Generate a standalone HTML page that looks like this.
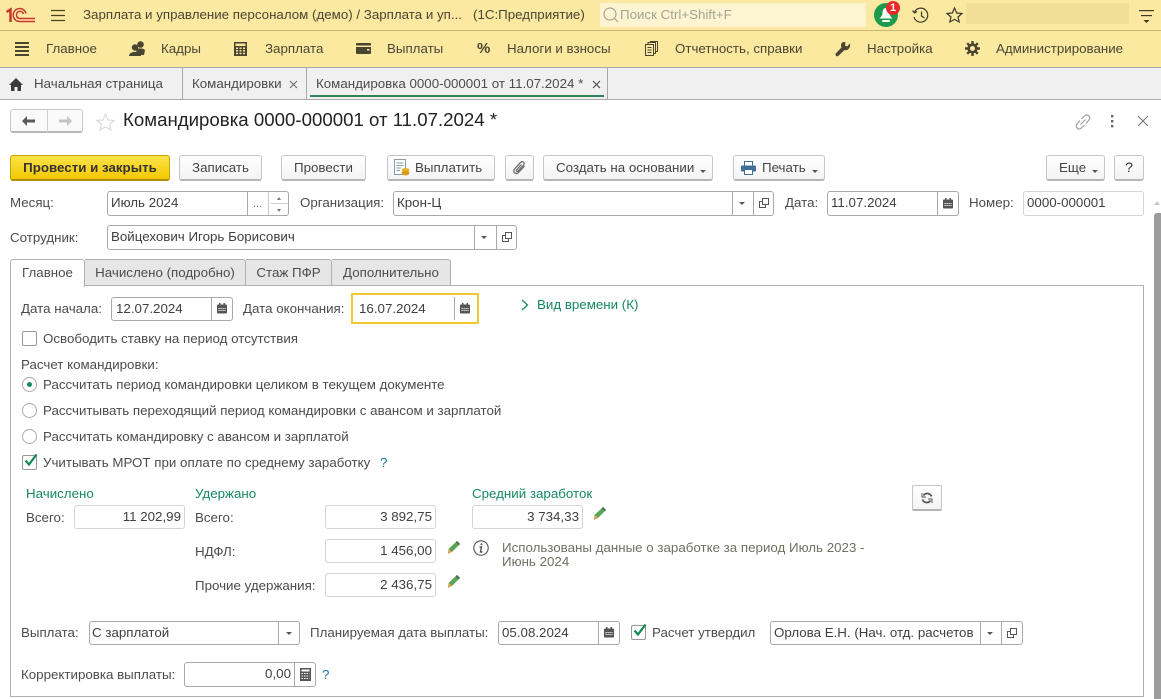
<!DOCTYPE html>
<html lang="ru"><head><meta charset="utf-8"><title>Командировка</title>
<style>
html,body{margin:0;padding:0;width:1161px;height:699px;overflow:hidden;background:#fff}
body{position:relative;font-family:"Liberation Sans",Arial,sans-serif;font-size:13.33px;color:#4c4c4c}
.a,.t,.f,.b,svg.i,.d{position:absolute}
.t{white-space:nowrap;line-height:16px;height:16px}
.f{box-sizing:border-box;border:1px solid #a9a9a9;border-radius:3px;background:#fff;line-height:22px;padding-left:3px;white-space:nowrap;color:#3f3f3f}
.l{border-color:#d4d4d4}
.r{text-align:right;padding:0 3px 0 0}
.d{top:0;bottom:0;width:1px;background:#a9a9a9}
.b{box-sizing:border-box;top:155px;height:26px;border:1px solid #c6c6c6;border-bottom:2px solid #b5b5b5;border-radius:3px;background:linear-gradient(#fff,#f4f4f4);line-height:23px;text-align:center;white-space:nowrap;color:#444}
.m{color:#4a4535}
.g{color:#16895f}
.q{color:#1a7a9e}
svg.i{overflow:visible}
.tb{position:absolute;top:259px;height:27px;box-sizing:border-box;background:#e6e6e6;border:1px solid #b0b0b0;border-left:0;border-radius:0 3px 0 0;line-height:26px;text-align:center;color:#4c4c4c}
.ar{position:absolute;width:0;height:0;border:3px solid transparent;border-top:3px solid #555;border-bottom:0}
</style></head><body>

<!-- title bar -->
<div class="a" style="left:0;top:0;width:1161px;height:30px;background:#fbe9a1"></div>
<div class="a" style="left:0;top:30px;width:1161px;height:1px;background:#c8b670"></div>
<svg class="i" style="left:0;top:0" width="40" height="30" viewBox="0 0 40 30" fill="none" stroke="#c8372d" stroke-width="1.500">
<path d="M6.500 12 10.500 9.500V22" stroke-width="2.500"/><path d="M26 13.500A6.500 6.500 0 1 0 20.500 21.500H35"/><path d="M23.500 14A3.600 3.600 0 1 0 20.500 18.500H35"/></svg>
<svg class="i" style="left:51px;top:9px" width="15" height="13" stroke="#4a4320" stroke-width="1.2"><path d="M0 1.500H14M0 6.500H14M0 11.500H14"/></svg>
<div class="t m" style="left:83px;top:7px">Зарплата и управление персоналом (демо) / Зарплата и уп...</div>
<div class="t m" style="left:473px;top:7px">(1С:Предприятие)</div>
<div class="a" style="left:600px;top:3px;width:266px;height:24px;background:#fdf5d2"></div>
<svg class="i" style="left:603px;top:7px" width="16" height="17" fill="none" stroke="#a8a598" stroke-width="1.2"><circle cx="7" cy="7" r="6"/><path d="M11.500 11.500 15 15"/></svg>
<div class="t" style="left:620px;top:7px;color:#a4a296">Поиск Ctrl+Shift+F</div>
<div class="a" style="left:874px;top:3px;width:24px;height:24px;border-radius:50%;background:#1d9a4c"></div>
<svg class="i" style="left:878px;top:7px" width="16" height="16" fill="#fff"><path d="M8 1C5.500 1 4.500 3.500 4.500 6 4.500 8.500 3 10 1.500 11.500H14.500C13 10 11.500 8.500 11.500 6 11.500 3.500 10.500 1 8 1Z"/><rect x="4" y="13" width="8" height="2" rx="1"/></svg>
<div class="a" style="left:886px;top:1px;width:14px;height:14px;border-radius:50%;background:#e8282b;color:#fff;font-weight:bold;font-size:11px;line-height:14px;text-align:center">1</div>
<svg class="i" style="left:912px;top:7px" width="18" height="17" fill="none" stroke="#3c3a30" stroke-width="1.200"><path d="M2.500 5A7 7 0 1 1 2 10"/><path d="M.5 3.500 2.500 6 5 4.500" /><path d="M9.500 4.500V9L12.500 11"/></svg>
<svg class="i" style="left:946px;top:7px" width="17" height="16" fill="none" stroke="#3c3a30" stroke-width="1.200"><path d="M8.500 1 10.700 6 16 6.500 12 10 13.200 15 8.500 12.400 3.800 15 5 10 1 6.500 6.300 6Z"/></svg>
<div class="a" style="left:966px;top:3px;width:163px;height:21px;background:#f1df98"></div>
<svg class="i" style="left:1139px;top:9px" width="16" height="17" fill="#3f3a22"><rect width="15" height="1.200" y="1"/><rect x="2" width="11" height="1.200" y="6"/><path d="M4.500 11H10.500L7.500 14Z"/></svg>

<!-- menu bar -->
<div class="a" style="left:0;top:31px;width:1161px;height:36px;background:#fbe9a0"></div>
<div class="a" style="left:0;top:67px;width:1161px;height:1px;background:#a8a8a8"></div>
<svg class="i" style="left:15px;top:42px" width="15" height="14" fill="#4a4530"><rect width="14" height="2" y="0"/><rect width="14" height="2" y="4"/><rect width="14" height="2" y="8"/><rect width="14" height="2" y="12"/></svg>
<div class="t m" style="left:46px;top:41px">Главное</div>
<svg class="i" style="left:129px;top:41px" width="18" height="16" fill="#4a4530"><circle cx="11.500" cy="3.500" r="3.300"/><path d="M7 8.500C9 7 14 7 16 9L15 14H8Z" /><circle cx="6" cy="6.500" r="3.200"/><path d="M0 15C0 9.500 12 9.500 12 15Z"/></svg>
<div class="t m" style="left:161px;top:41px">Кадры</div>
<svg class="i" style="left:234px;top:42px" width="13" height="14"><rect width="13" height="14" fill="#4a4530"/><rect x="1.500" y="1.500" width="10" height="2.500" fill="#fbe9a0"/><g fill="#fbe9a0"><rect x="2" y="5.500" width="2" height="1.500"/><rect x="5.500" y="5.500" width="2" height="1.500"/><rect x="9" y="5.500" width="2" height="1.500"/><rect x="2" y="8" width="2" height="1.500"/><rect x="5.500" y="8" width="2" height="1.500"/><rect x="9" y="8" width="2" height="1.500"/><rect x="2" y="10.700" width="2" height="1.500"/><rect x="5.500" y="10.700" width="2" height="1.500"/><rect x="9" y="10.700" width="2" height="1.500"/></g></svg>
<div class="t m" style="left:265px;top:41px">Зарплата</div>
<svg class="i" style="left:356px;top:43px" width="15" height="11"><rect width="15" height="11" rx="1" fill="#4a4530"/><rect y="2.500" width="15" height="1.500" fill="#fbe9a0"/><rect x="11" y="6" width="2.500" height="1.500" fill="#fbe9a0"/></svg>
<div class="t m" style="left:387px;top:41px">Выплаты</div>
<div class="t" style="left:477px;top:41px;font-weight:bold;font-size:15px;color:#4a4530">%</div>
<div class="t m" style="left:507px;top:41px">Налоги и взносы</div>
<svg class="i" style="left:645px;top:41px" width="13" height="15" fill="none" stroke="#4a4530"><rect x=".5" y="3.500" width="8" height="11" fill="#fbe9a0"/><path d="M3 3V1.500H10.500V12.500H9M5.500 1V.5H12.500V10.500H11M2.500 6.500H6.500M2.500 9H6.500M2.500 11.500H6.500"/></svg>
<div class="t m" style="left:675px;top:41px">Отчетность, справки</div>
<svg class="i" style="left:835px;top:41px" width="16" height="16" fill="#4a4530"><path d="M15 2.500 12 5.500 10 4.500 10.500 1.500C8.500.2 6 1.500 6 4.500L6.500 6.500 .8 12.500C-.2 14 1.500 16 3.200 15L9.500 9C12.500 10 15.800 7 15 2.500Z"/></svg>
<div class="t m" style="left:867px;top:41px">Настройка</div>
<svg class="i" style="left:965px;top:41px" width="15" height="15" fill="none" stroke="#4a4530"><circle cx="7.500" cy="7.500" r="3.800" stroke-width="2.600"/><path stroke-width="2.400" d="M7.500 0V3M7.500 12V15M0 7.500H3M12 7.500H15M2.200 2.200 4.300 4.300M10.700 10.700 12.800 12.800M12.800 2.200 10.700 4.300M4.300 10.700 2.200 12.800"/></svg>
<div class="t m" style="left:996px;top:41px">Администрирование</div>

<!-- tab strip -->
<div class="a" style="left:0;top:68px;width:1161px;height:31px;background:#f0f0f0"></div>
<div class="a" style="left:0;top:99px;width:1161px;height:1px;background:#a8a8a8"></div>
<div class="a" style="left:182px;top:68px;width:1px;height:31px;background:#a8a8a8"></div>
<div class="a" style="left:306px;top:68px;width:1px;height:31px;background:#a8a8a8"></div>
<div class="a" style="left:607px;top:68px;width:1px;height:31px;background:#a8a8a8"></div>
<div class="a" style="left:310px;top:95px;width:294px;height:2px;background:#2f8259"></div>
<svg class="i" style="left:9px;top:78px" width="14" height="13" fill="#3a3a3a"><path d="M7 0 14 7H12V13H8.500V9H5.500V13H2V7H0Z"/></svg>
<div class="t" style="left:34px;top:76px">Начальная страница</div>
<div class="t" style="left:192px;top:76px">Командировки</div>
<svg class="i" style="left:289px;top:80px" width="9" height="9" stroke="#666"><path d="M1 1 8 8M8 1 1 8"/></svg>
<div class="t" style="left:316px;top:76px">Командировка 0000-000001 от 11.07.2024 *</div>
<svg class="i" style="left:592px;top:80px" width="9" height="9" stroke="#444"><path d="M1 1 8 8M8 1 1 8"/></svg>

<!-- header -->
<div class="a" style="left:10px;top:109px;width:73px;height:24px;box-sizing:border-box;border:1px solid #c8c8c8;border-bottom:2px solid #b8b8b8;border-radius:3px;background:#fafafa"></div>
<div class="a" style="left:47px;top:110px;width:1px;height:22px;background:#d0d0d0"></div>
<svg class="i" style="left:22px;top:116px" width="14" height="10" fill="#5a5a5a"><path d="M0 5 5 0V3.500H13V6.500H5V10Z"/></svg>
<svg class="i" style="left:58px;top:116px" width="14" height="10" fill="#c4c4c4"><path d="M14 5 9 0V3.500H1V6.500H9V10Z"/></svg>
<svg class="i" style="left:96px;top:113px" width="19" height="18" fill="none" stroke="#dcdcdc" stroke-width="1.200"><path d="M9.500 1 12 7 18 7.500 13.500 11.500 15 17 9.500 14 4 17 5.500 11.500 1 7.500 7 7Z"/></svg>
<div class="t" style="left:123px;top:110px;font-size:18.67px;line-height:20px;height:20px;color:#222">Командировка 0000-000001 от 11.07.2024 *</div>
<svg class="i" style="left:1075px;top:114px" width="16" height="16" fill="none" stroke="#a0a0a0" stroke-width="1.200"><path d="M6.500 5 9.500 2A2.800 2.800 0 0 1 14 6L11 9.500M9.500 11 6.500 14A2.800 2.800 0 0 1 2 10L5 6.500M5.500 10.500 10.500 5.500"/></svg>
<svg class="i" style="left:1110px;top:115px" width="4" height="14" fill="#666"><rect x="1" y="0" width="2.400" height="2.400"/><rect x="1" y="5" width="2.400" height="2.400"/><rect x="1" y="10" width="2.400" height="2.400"/></svg>
<svg class="i" style="left:1137px;top:115px" width="12" height="12" stroke="#777" stroke-width="1.100"><path d="M1 1 11 11M11 1 1 11"/></svg>

<!-- command bar -->
<div class="b" style="left:10px;width:160px;background:linear-gradient(#fbe34a,#f4c800);border-color:#c9a300;border-bottom-color:#b08f00;font-weight:bold;color:#333">Провести и закрыть</div>
<div class="b" style="left:179px;width:83px">Записать</div>
<div class="b" style="left:281px;width:85px">Провести</div>
<div class="b" style="left:387px;width:108px;padding-left:27px;text-align:left">Выплатить</div>
<svg class="i" style="left:394px;top:159px" width="16" height="18"><rect x=".5" y=".5" width="11" height="15" fill="#fff" stroke="#8e9aa8"/><path d="M2.500 4H9.500M2.500 6.500H9.500M2.500 9H7M2.500 11.500H6" stroke="#8e9aa8"/><ellipse cx="11.500" cy="11" rx="4" ry="2" fill="#e8b325"/><ellipse cx="11.500" cy="14" rx="4" ry="2.400" fill="#d99a1a"/></svg>
<div class="b" style="left:505px;width:29px"></div>
<svg class="i" style="left:512px;top:160px" width="15" height="16" fill="none" stroke="#6e6e6e" stroke-width="1.300"><path d="M12.500 6 6.500 12.500C4 15 0 12 2.500 9L8.500 2.500C10.500.5 13.500 2.800 11.500 5L6 11C5 12 3.700 11 4.500 10L9.500 4.500"/></svg>
<div class="b" style="left:543px;width:170px;padding-left:12px;text-align:left">Создать на основании</div>
<div class="ar" style="left:700px;top:170px"></div>
<div class="b" style="left:733px;width:92px;padding-left:28px;text-align:left">Печать</div>
<svg class="i" style="left:741px;top:161px" width="15" height="14"><rect x="3.500" y=".5" width="8" height="5" fill="#fff" stroke="#3f6f96"/><rect y="4.500" width="15" height="6" rx="1" fill="#3f6f96"/><rect x="3.500" y="8.500" width="8" height="5" fill="#fff" stroke="#3f6f96"/></svg>
<div class="ar" style="left:812px;top:170px"></div>
<div class="b" style="left:1046px;width:59px;padding-left:12px;text-align:left">Еще</div>
<div class="ar" style="left:1092px;top:170px"></div>
<div class="b" style="left:1114px;width:30px;font-size:14px;color:#333">?</div>

<!-- row 1 -->
<div class="t" style="left:10px;top:195px">Месяц:</div>
<div class="f" style="left:107px;top:191px;width:182px;height:25px">Июль 2024<div class="d" style="left:139px"></div><div class="d" style="left:160px;background:#c8c8c8"></div></div>
<div class="t" style="left:253px;top:196px;color:#666;font-size:11px">...</div>
<div class="a" style="left:271px;top:203px;width:17px;height:1px;background:#d0d0d0"></div>
<div class="a" style="left:277px;top:197px;border:2px solid transparent;border-bottom:3px solid #777;border-top:0"></div>
<div class="ar" style="left:277px;top:209px;border-width:2px;border-top-width:3px;border-top-color:#777;border-bottom:0"></div>
<div class="t" style="left:300px;top:195px">Организация:</div>
<div class="f" style="left:393px;top:191px;width:381px;height:25px">Крон-Ц<div class="d" style="left:338px"></div><div class="d" style="left:359px"></div></div>
<div class="ar" style="left:739px;top:202px"></div>
<svg class="i" style="left:759px;top:198px" width="11" height="11" fill="none" stroke="#555"><rect x="3.500" y=".5" width="6" height="6"/><path d="M3 3.500H.5V9.500H6.500V7"/></svg>
<div class="t" style="left:785px;top:195px">Дата:</div>
<div class="f" style="left:827px;top:191px;width:132px;height:25px">11.07.2024<div class="d" style="left:109px"></div></div>
<svg class="i cal" style="left:943px;top:198px" width="10" height="11"><rect y="1.500" width="10" height="9" rx="1" fill="#555"/><rect x="2" y="0" width="1.500" height="3" fill="#555"/><rect x="6.500" y="0" width="1.500" height="3" fill="#555"/><path d="M1.500 5.500H8.500M1.500 7.500H8.500" stroke="#fff" stroke-dasharray="1.200 .8"/></svg>
<div class="t" style="left:969px;top:195px">Номер:</div>
<div class="f l" style="left:1023px;top:191px;width:121px;height:25px">0000-000001</div>

<!-- row 2 -->
<div class="t" style="left:10px;top:230px">Сотрудник:</div>
<div class="f" style="left:107px;top:225px;width:410px;height:25px">Войцехович Игорь Борисович<div class="d" style="left:366px"></div><div class="d" style="left:388px"></div></div>
<div class="ar" style="left:481px;top:236px"></div>
<svg class="i" style="left:502px;top:232px" width="11" height="11" fill="none" stroke="#555"><rect x="3.500" y=".5" width="6" height="6"/><path d="M3 3.500H.5V9.500H6.500V7"/></svg>

<!-- tab panel -->
<div class="a" style="left:10px;top:285px;width:1134px;height:412px;box-sizing:border-box;border:1px solid #b0b0b0"></div>
<div class="a" style="left:10px;top:259px;width:75px;height:28px;box-sizing:border-box;background:#fff;border:1px solid #b0b0b0;border-bottom:0;border-radius:3px 3px 0 0;line-height:26px;text-align:center">Главное</div>
<div class="tb" style="left:85px;width:161px">Начислено (подробно)</div>
<div class="tb" style="left:246px;width:86px">Стаж ПФР</div>
<div class="tb" style="left:332px;width:119px">Дополнительно</div>

<!-- dates -->
<div class="t" style="left:21px;top:301px">Дата начала:</div>
<div class="f" style="left:111px;top:297px;width:122px;height:24px;padding-left:4px">12.07.2024<div class="d" style="left:99px"></div></div>
<svg class="i" style="left:217px;top:303px" width="10" height="11"><rect y="1.500" width="10" height="9" rx="1" fill="#555"/><rect x="2" y="0" width="1.500" height="3" fill="#555"/><rect x="6.500" y="0" width="1.500" height="3" fill="#555"/><path d="M1.500 5.500H8.500M1.500 7.500H8.500" stroke="#fff" stroke-dasharray="1.200 .8"/></svg>
<div class="t" style="left:243px;top:301px">Дата окончания:</div>
<div class="f" style="left:351px;top:293px;width:128px;height:31px;border:2px solid #f0c92e;border-radius:1px;line-height:27px;padding-left:6px">16.07.2024<div class="d" style="left:101px;top:2px;bottom:2px"></div></div>
<svg class="i" style="left:460px;top:303px" width="10" height="11"><rect y="1.500" width="10" height="9" rx="1" fill="#555"/><rect x="2" y="0" width="1.500" height="3" fill="#555"/><rect x="6.500" y="0" width="1.500" height="3" fill="#555"/><path d="M1.500 5.500H8.500M1.500 7.500H8.500" stroke="#fff" stroke-dasharray="1.200 .8"/></svg>
<svg class="i" style="left:521px;top:299px" width="8" height="12" fill="none" stroke="#16895f" stroke-width="1.300"><path d="M1 1 6.500 6 1 11"/></svg>
<div class="t g" style="left:537px;top:297px">Вид времени (К)</div>

<!-- checks and radios -->
<div class="a" style="left:22px;top:331px;width:15px;height:15px;box-sizing:border-box;border:1px solid #999;border-radius:2px;background:#fff"></div>
<div class="t" style="left:43px;top:331px">Освободить ставку на период отсутствия</div>
<div class="t" style="left:21px;top:357px">Расчет командировки:</div>
<div class="a" style="left:22px;top:377px;width:15px;height:15px;box-sizing:border-box;border:1px solid #aaa;border-radius:50%"></div>
<div class="a" style="left:27px;top:382px;width:5px;height:5px;border-radius:50%;background:#16895f"></div>
<div class="t" style="left:43px;top:377px">Рассчитать период командировки целиком в текущем документе</div>
<div class="a" style="left:22px;top:403px;width:15px;height:15px;box-sizing:border-box;border:1px solid #aaa;border-radius:50%"></div>
<div class="t" style="left:43px;top:403px">Рассчитывать переходящий период командировки с авансом и зарплатой</div>
<div class="a" style="left:22px;top:429px;width:15px;height:15px;box-sizing:border-box;border:1px solid #aaa;border-radius:50%"></div>
<div class="t" style="left:43px;top:429px">Рассчитать командировку с авансом и зарплатой</div>
<div class="a" style="left:22px;top:455px;width:15px;height:15px;box-sizing:border-box;border:1px solid #999;border-radius:2px"></div>
<svg class="i" style="left:24px;top:453px" width="14" height="14" fill="none" stroke="#0f8a55" stroke-width="2.200"><path d="M1.500 7.500 5 11.500 12.500 1.500"/></svg>
<div class="t" style="left:43px;top:455px">Учитывать МРОТ при оплате по среднему заработку</div>
<div class="t q" style="left:380px;top:455px">?</div>

<!-- amounts -->
<div class="t g" style="left:26px;top:486px">Начислено</div>
<div class="t g" style="left:195px;top:486px">Удержано</div>
<div class="t g" style="left:472px;top:486px">Средний заработок</div>
<div class="t" style="left:26px;top:510px">Всего:</div>
<div class="f l r" style="left:74px;top:505px;width:111px;height:24px">11 202,99</div>
<div class="t" style="left:195px;top:510px">Всего:</div>
<div class="f l r" style="left:325px;top:505px;width:111px;height:24px">3 892,75</div>
<div class="f l r" style="left:472px;top:505px;width:111px;height:24px">3 734,33</div>
<div class="t" style="left:195px;top:544px">НДФЛ:</div>
<div class="f l r" style="left:325px;top:539px;width:111px;height:24px">1 456,00</div>
<div class="t" style="left:195px;top:578px">Прочие удержания:</div>
<div class="f l r" style="left:325px;top:573px;width:111px;height:24px">2 436,75</div>
<svg class="i" style="left:593px;top:506px" width="14" height="15"><path d="M10 1 13 4 5 12 1.500 9Z" fill="#5aa55a"/><path d="M1.500 9 5 12 .8 14Z" fill="#d9a24d"/><path d="M10 1 13 4 11.800 5.200 8.800 2.200Z" fill="#3d6d48"/></svg>
<svg class="i" style="left:447px;top:540px" width="14" height="15"><path d="M10 1 13 4 5 12 1.500 9Z" fill="#5aa55a"/><path d="M1.500 9 5 12 .8 14Z" fill="#d9a24d"/><path d="M10 1 13 4 11.800 5.200 8.800 2.200Z" fill="#3d6d48"/></svg>
<svg class="i" style="left:447px;top:574px" width="14" height="15"><path d="M10 1 13 4 5 12 1.500 9Z" fill="#5aa55a"/><path d="M1.500 9 5 12 .8 14Z" fill="#d9a24d"/><path d="M10 1 13 4 11.800 5.200 8.800 2.200Z" fill="#3d6d48"/></svg>
<svg class="i" style="left:473px;top:540px" width="16" height="16" fill="none" stroke="#555" stroke-width="1.100"><circle cx="8" cy="8" r="7.200"/><path d="M6.500 7H8.500L7.500 12H9.500" stroke-width="1.400"/><circle cx="8.500" cy="4.300" r="1" fill="#555" stroke="none"/></svg>
<div class="t" style="left:502px;top:540px;color:#6f6f62">Использованы данные о заработке за период Июль 2023 -</div>
<div class="t" style="left:502px;top:554px;color:#6f6f62">Июнь 2024</div>
<div class="a" style="left:912px;top:485px;width:30px;height:26px;box-sizing:border-box;border:1px solid #c6c6c6;border-bottom:2px solid #b5b5b5;border-radius:2px;background:linear-gradient(#fff,#f4f4f4)"></div>
<svg class="i" style="left:921px;top:492px" width="12" height="12" fill="none" stroke="#555" stroke-width="1.800"><path d="M10.500 4.500A4.500 4.500 0 0 0 2.500 3.500M1.500 7.500A4.500 4.500 0 0 0 9.500 8.500"/><path d="M1 1V5H5M11 11V7H7" stroke-width="1"/></svg>

<!-- bottom rows -->
<div class="t" style="left:21px;top:625px">Выплата:</div>
<div class="f" style="left:89px;top:621px;width:211px;height:24px;padding-left:2px">С зарплатой<div class="d" style="left:188px"></div></div>
<div class="ar" style="left:286px;top:632px"></div>
<div class="t" style="left:310px;top:625px">Планируемая дата выплаты:</div>
<div class="f" style="left:498px;top:621px;width:122px;height:24px">05.08.2024<div class="d" style="left:99px"></div></div>
<svg class="i" style="left:604px;top:627px" width="10" height="11"><rect y="1.500" width="10" height="9" rx="1" fill="#555"/><rect x="2" y="0" width="1.500" height="3" fill="#555"/><rect x="6.500" y="0" width="1.500" height="3" fill="#555"/><path d="M1.500 5.500H8.500M1.500 7.500H8.500" stroke="#fff" stroke-dasharray="1.200 .8"/></svg>
<div class="a" style="left:631px;top:625px;width:15px;height:15px;box-sizing:border-box;border:1px solid #999;border-radius:2px"></div>
<svg class="i" style="left:633px;top:623px" width="14" height="14" fill="none" stroke="#0f8a55" stroke-width="2.200"><path d="M1.500 7.500 5 11.500 12.500 1.500"/></svg>
<div class="t" style="left:652px;top:625px">Расчет утвердил</div>
<div class="f" style="left:770px;top:621px;width:253px;height:24px">Орлова Е.Н. (Нач. отд. расчетов<div class="d" style="left:209px"></div><div class="d" style="left:230px"></div></div>
<div class="ar" style="left:987px;top:632px"></div>
<svg class="i" style="left:1007px;top:628px" width="11" height="11" fill="none" stroke="#555"><rect x="3.500" y=".5" width="6" height="6"/><path d="M3 3.500H.5V9.500H6.500V7"/></svg>
<div class="t" style="left:21px;top:667px">Корректировка выплаты:</div>
<div class="f r" style="left:184px;top:662px;width:132px;height:25px;padding-right:24px">0,00<div class="d" style="left:109px"></div></div>
<svg class="i" style="left:300px;top:668px" width="11" height="13"><rect width="11" height="13" fill="#555"/><rect x="1.500" y="1.500" width="8" height="2" fill="#fff"/><path d="M1.500 5.500H9.500M1.500 8H9.500M1.500 10.500H9.500" stroke="#fff" stroke-dasharray="1.500 1"/></svg>
<div class="t q" style="left:322px;top:667px">?</div>

<!-- scrollbar -->
<div class="a" style="left:1154px;top:213px;width:7px;height:486px;background:#9c9c9c;border-radius:3px 0 0 0"></div>
<div class="a" style="left:1154px;top:201px;border:3px solid transparent;border-bottom:4px solid #c8c8c8;border-top:0"></div>
</body></html>
